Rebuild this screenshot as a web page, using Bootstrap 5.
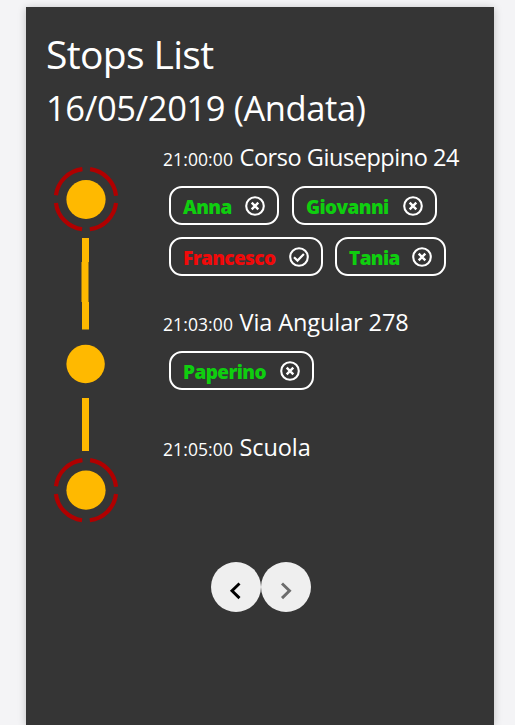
<!DOCTYPE html>
<html lang="it">
<head>
<meta charset="utf-8">
<meta name="viewport" content="width=device-width, initial-scale=1">
<title>Stops List</title>
<link rel="stylesheet" href="https://cdn.jsdelivr.net/npm/bootstrap@5.3.0/dist/css/bootstrap.min.css">
<style>
body{background:#f4f4f6;font-family:"Open Sans","Noto Sans",sans-serif;overflow:hidden}
.panel{width:468px;height:718px;margin:7px 0 0 26px;padding:20px 20px 0;background:#353535;box-shadow:0 1px 8px rgba(0,0,0,.22)}
.title{font-size:39px;line-height:54px;letter-spacing:-.65px;margin:0;font-weight:400}
.date{font-size:34.5px;line-height:46px;letter-spacing:-.4px;margin:4px 0 0;font-weight:400}
.route{margin-top:9px;height:396px}
.track{width:72px;height:396px;margin-left:4px;flex:none}
.stops{margin-left:41px}
.stop-name{font-size:23.5px;line-height:34px;letter-spacing:-.1px}
.stop-name time{font-size:17.5px;letter-spacing:.1px;margin-right:.5px}
.tight{letter-spacing:-.45px}
.stop-tall{height:165px}
.stop-mid{height:125px}
.kids{margin:10px 0 0 6px;column-gap:12px;row-gap:12px}
.kid{height:39px;border:2px solid #fff;border-radius:13px;padding:3px 12px 0;font-size:19px;font-weight:800;letter-spacing:-.6px;color:#0fce0f}
.kid svg{width:20px;height:20px;margin:-2px 0 0;color:#fff;flex:none}
.kid.away{color:#f00a0a}
.w1{width:110px}.w2{width:145px}.w3{width:154px}.w4{width:111px}
.w1+.w2{margin-left:1px}
.pager{margin-top:26px;padding-left:2px}
.round{width:50px;height:50px;background:#efefef;border:0;color:#000}
.round:disabled{color:rgba(0,0,0,.55)}
</style>
<script src="https://cdn.jsdelivr.net/npm/bootstrap@5.3.0/dist/js/bootstrap.bundle.min.js"></script>
</head>
<body>
<svg class="d-none">
<symbol id="cross" viewBox="0 0 20 20"><g fill="none" stroke="currentColor"><circle cx="10" cy="10" r="8.8" stroke-width="2.1"/><path d="M6.7 6.7l6.6 6.6M13.3 6.7l-6.6 6.6" stroke-width="2.4"/></g></symbol>
<symbol id="check" viewBox="0 0 20 20"><g fill="none" stroke="currentColor"><circle cx="10" cy="10" r="8.8" stroke-width="2.1"/><path d="M5 10.2l3.500 3.400 6.400-6.600" stroke-width="2.2"/></g></symbol>
</svg>
<main class="panel text-white">
<h1 class="title text-nowrap">Stops List</h1>
<h2 class="date text-nowrap">16/05/2019 (Andata)</h2>
<div class="route d-flex">
<svg class="track" viewBox="50 140 72 396">
<g fill="none" stroke="#b00000" stroke-width="4.2" stroke-dasharray="39.8 7.8" stroke-dashoffset="-3.9">
<circle cx="86" cy="199.2" r="30.3"/><circle cx="86" cy="490.2" r="30.3"/></g>
<g fill="#ffb900"><circle cx="86" cy="199.5" r="19.6"/><circle cx="85.6" cy="364" r="19.2"/><circle cx="86" cy="490.2" r="19.6"/>
<path d="M82 238h7v24l-.5 0v40h.5v27.500h-7v-27.500h-.5v-40h.5zM82 398h7v53h-7z"/></g>
</svg>
<div class="stops">
<section class="stop-tall">
<div class="stop-name text-nowrap"><time>21:00:00</time> <span class="tight">Corso Giuseppino 24</span></div>
<div class="kids d-flex flex-wrap">
<div class="kid w1 d-flex align-items-center justify-content-between"><span>Anna</span><svg><use href="#cross"/></svg></div>
<div class="kid w2 d-flex align-items-center justify-content-between"><span>Giovanni</span><svg><use href="#cross"/></svg></div>
<div class="kid w3 away d-flex align-items-center justify-content-between"><span>Francesco</span><svg><use href="#check"/></svg></div>
<div class="kid w4 d-flex align-items-center justify-content-between"><span>Tania</span><svg><use href="#cross"/></svg></div>
</div>
</section>
<section class="stop-mid">
<div class="stop-name text-nowrap"><time>21:03:00</time> <span>Via Angular 278</span></div>
<div class="kids d-flex flex-wrap">
<div class="kid w2 d-flex align-items-center justify-content-between"><span>Paperino</span><svg><use href="#cross"/></svg></div>
</div>
</section>
<section>
<div class="stop-name text-nowrap"><time>21:05:00</time> <span>Scuola</span></div>
</section>
</div>
</div>
<nav class="pager d-flex justify-content-center">
<button class="round rounded-circle p-0" aria-label="Indietro"><svg class="d-block" width="50" height="50"><path d="M28.500 21.500l-7.500 7.200 7.500 7.400" fill="none" stroke="currentColor" stroke-width="2.900"/></svg></button>
<button class="round rounded-circle p-0" aria-label="Avanti" disabled><svg class="d-block" width="50" height="50"><path d="M21 21.500l7.500 7.200-7.500 7.400" fill="none" stroke="currentColor" stroke-width="2.900"/></svg></button>
</nav>
</main>
</body>
</html>
